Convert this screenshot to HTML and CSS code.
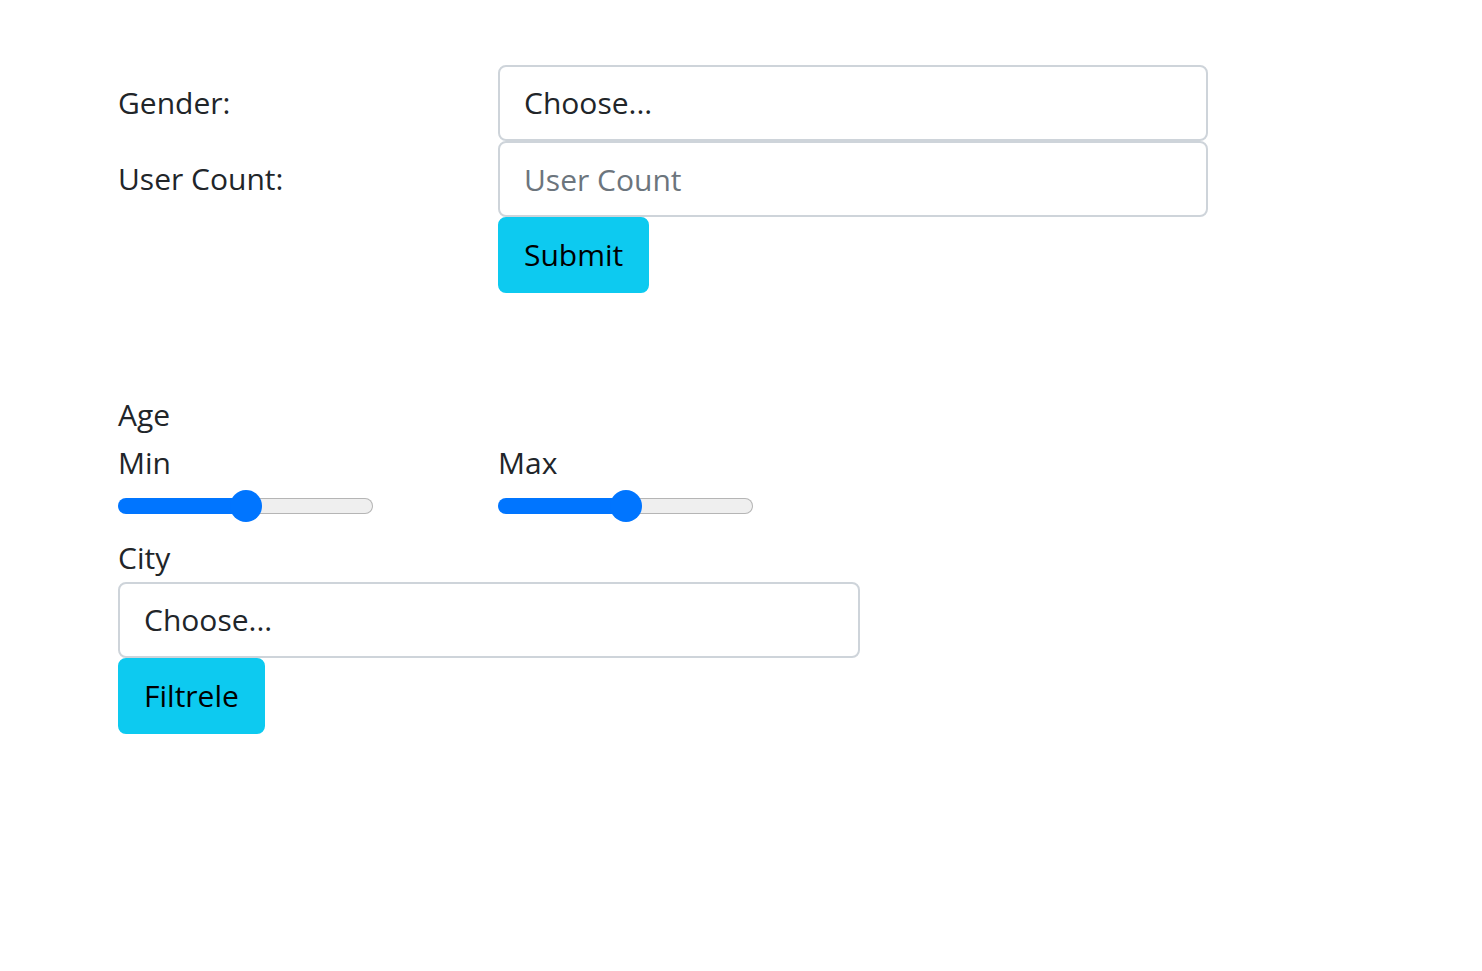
FILE: index.html
```html
<!DOCTYPE html>
<html lang="en">
<head>
<meta charset="utf-8">
<title>Users</title>
<link rel="stylesheet" href="styles.css">
</head>
<body>
<main class="page">
  <form class="user-form">
    <div class="form-row">
      <label class="form-label" for="gender">Gender:</label>
      <select class="control" id="gender"><option>Choose...</option></select>
    </div>
    <div class="form-row">
      <label class="form-label" for="count">User Count:</label>
      <input class="control" id="count" type="text" placeholder="User Count">
    </div>
    <div class="form-row">
      <span></span>
      <div><button class="btn" type="button">Submit</button></div>
    </div>
  </form>

  <section class="filter">
    <div class="line">Age</div>
    <div class="ranges">
      <div class="range-col">
        <div class="line">Min</div>
        <input class="range" type="range" min="0" max="100" value="50" style="--fill:50%">
      </div>
      <div class="range-col">
        <div class="line">Max</div>
        <input class="range" type="range" min="0" max="100" value="50" style="--fill:50%">
      </div>
    </div>
    <div class="line">City</div>
    <select class="control city"><option>Choose...</option></select>
    <div><button class="btn" type="button">Filtrele</button></div>
  </section>
</main>
</body>
</html>
```

FILE: styles.css
```css
* { box-sizing: border-box; }

html, body {
  margin: 0;
  background: #fff;
}

body {
  font-family: "Open Sans", "Noto Sans", sans-serif;
  font-size: 30px;
  line-height: 48px;
  color: #212529;
}

.page {
  padding: 65px 0 0 118px;
}

.user-form {
  display: flex;
  flex-direction: column;
}

.form-row {
  display: grid;
  grid-template-columns: 380px 710px;
}

.form-label {
  padding-top: 14px;
}

.control {
  -webkit-appearance: none;
  appearance: none;
  display: block;
  width: 100%;
  height: 76px;
  margin: 0;
  padding: 0 24px;
  font: inherit;
  line-height: 48px;
  color: #212529;
  background: #fff;
  border: 2px solid #ced4da;
  border-radius: 8px;
  outline: none;
}

.control::placeholder {
  color: #6c757d;
}

.btn {
  display: inline-block;
  height: 76px;
  margin: 0;
  padding: 0 24px;
  font: inherit;
  line-height: 48px;
  color: #000;
  background: #0dcaf0;
  border: 2px solid #0dcaf0;
  border-radius: 8px;
  cursor: pointer;
}

.filter {
  margin-top: 98px;
  display: flex;
  flex-direction: column;
  align-items: flex-start;
}

.line {
  height: 48px;
}

.ranges {
  display: grid;
  grid-template-columns: 380px 380px;
}

.range-col {
  display: flex;
  flex-direction: column;
}

.range {
  -webkit-appearance: none;
  appearance: none;
  width: 255px;
  height: 32px;
  margin: 3px 0 12px;
  padding: 0;
  background: transparent;
  outline: none;
}

.range::-webkit-slider-runnable-track {
  height: 16px;
  border: 1px solid transparent;
  border-radius: 8px;
  background:
    linear-gradient(#0075ff, #0075ff) 0 0 / var(--fill) 100% no-repeat border-box,
    linear-gradient(#efefef, #efefef) padding-box,
    linear-gradient(#b5b5b5, #b5b5b5) border-box;
}

.range::-webkit-slider-thumb {
  -webkit-appearance: none;
  appearance: none;
  width: 32px;
  height: 32px;
  margin-top: -9px;
  border: none;
  border-radius: 50%;
  background: #0075ff;
}

.city {
  width: 742px;
}
```
